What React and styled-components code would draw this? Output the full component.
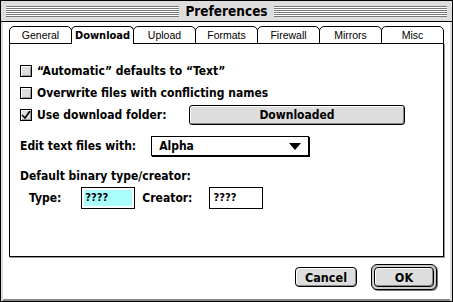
import React from "react";
import styled, { createGlobalStyle } from "styled-components";

const Global = createGlobalStyle`
  html, body { margin: 0; padding: 0; background: #fff; }
  * { box-sizing: border-box; }
`;

const SYS = `"DejaVu Sans Condensed", "Liberation Sans", sans-serif`;

const Window = styled.div`
  width: 453px;
  height: 302px;
  border: 1px solid #000;
  background: #fff;
  display: flex;
  flex-direction: column;
  font-family: ${SYS};
  font-weight: bold;
  font-size: 12px;
  color: #000;
  box-shadow: inset -2px -2px 0 #888;
`;

const TitleBar = styled.div`
  height: 21px;
  background: #ddd;
  border-bottom: 1px solid #000;
  display: flex;
  align-items: center;
  padding: 0 5px;
  gap: 4px;
`;

const Stripes = styled.div`
  flex: 1;
  height: 11px;
  background: repeating-linear-gradient(to bottom, #777 0 1px, #fff 1px 2px);
`;

const Title = styled.div`
  font-size: 13.5px;
  padding: 0 2px;
  line-height: 16px;
`;

const Body = styled.div`
  flex: 1;
  display: flex;
  flex-direction: column;
  padding: 4px 6px 0 6px;
  border-left: 2px solid #ddd;
  border-right: 2px solid #ddd;
`;

const TabStrip = styled.div`
  display: flex;
  height: 18px;
  padding-right: 1px;
`;

const Tab = styled.div`
  flex: 1;
  height: 18px;
  border: 1px solid #000;
  border-bottom: ${p => (p.$active ? "none" : "1px solid #000")};
  border-radius: 5px 5px 0 0;
  margin-right: -1px;
  background: #fff;
  display: flex;
  align-items: center;
  justify-content: center;
  font-family: ${p => (p.$active ? SYS : `"Liberation Sans", sans-serif`)};
  font-size: ${p => (p.$active ? "11px" : "10.5px")};
  font-weight: ${p => (p.$active ? "bold" : "normal")};
  position: relative;
  z-index: ${p => (p.$active ? 1 : 0)};
`;

const Panel = styled.div`
  height: 214px;
  margin-top: -1px;
  border: 1px solid #000;
  box-shadow: 1px 1px 0 #999;
  padding: 16px 10px 0 10px;
  display: flex;
  flex-direction: column;
`;

const CheckRow = styled.label`
  display: flex;
  align-items: center;
  height: 22px;
  gap: 5px;
`;

const Box = styled.span`
  width: 12px;
  height: 12px;
  border: 1px solid #000;
  background: #ddd;
  box-shadow: inset 1px 1px 0 #fff, inset -1px -1px 0 #999;
  display: inline-flex;
  align-items: center;
  justify-content: center;
  flex: none;
`;

const FolderButton = styled.div`
  margin-left: auto;
  width: 216px;
  height: 20px;
  border: 1px solid #000;
  border-radius: 3px;
  background: #ddd;
  box-shadow: inset 1px 1px 0 #fff, inset -1px -1px 0 #888;
  display: flex;
  align-items: center;
  justify-content: center;
  margin-right: 28px;
`;

const FieldRow = styled.div`
  display: flex;
  align-items: center;
  height: 22px;
  margin-top: ${p => p.$mt || 0}px;
  padding-left: ${p => p.$indent || 0}px;
`;

const Popup = styled.div`
  margin-left: 15px;
  width: 158px;
  height: 20px;
  border: 1px solid #000;
  box-shadow: 1px 1px 0 #000;
  display: flex;
  align-items: center;
  padding: 0 7px 0 7px;
  justify-content: space-between;
`;

const Field = styled.div`
  width: 54px;
  height: 22px;
  border: 1px solid #000;
  padding: 2px;
  margin-left: ${p => p.$ml}px;
  margin-right: ${p => p.$mr || 0}px;
`;

const FieldInner = styled.div`
  height: 100%;
  background: ${p => (p.$focus ? "#aaffff" : "#fff")};
  font-size: 11px;
  line-height: 16px;
  padding-left: 1px;
`;

const Footer = styled.div`
  flex: 1;
  display: flex;
  justify-content: flex-end;
  align-items: center;
  gap: 14px;
  padding-right: 7px;
  padding-bottom: 4px;
`;

const PushButton = styled.div`
  width: ${p => p.$w}px;
  height: 20px;
  border: 1px solid #000;
  border-radius: 4px;
  background: #ddd;
  box-shadow: inset 1px 1px 0 #fff, inset -1px -1px 0 #888;
  display: flex;
  align-items: center;
  justify-content: center;
  font-size: 12.5px;
`;

const DefaultRing = styled.div`
  padding: 2px;
  border: 1px solid #000;
  border-radius: 6px;
  background: #ccc;
  box-shadow: 1px 1px 0 #777;
`;

const tabs = ["General", "Download", "Upload", "Formats", "Firewall", "Mirrors", "Misc"];

function Check({ checked }) {
  return (
    <Box>
      {checked && (
        <svg width="10" height="10" viewBox="0 0 10 10">
          <path d="M1 5 L4 8 L9 1" stroke="#000" strokeWidth="1.6" fill="none" />
        </svg>
      )}
    </Box>
  );
}

export default function App() {
  return (
    <>
      <Global />
      <Window>
        <TitleBar>
          <Stripes />
          <Title>Preferences</Title>
          <Stripes />
        </TitleBar>
        <Body>
          <TabStrip>
            {tabs.map(t => (
              <Tab key={t} $active={t === "Download"}>{t}</Tab>
            ))}
          </TabStrip>
          <Panel>
            <CheckRow><Check />“Automatic” defaults to “Text”</CheckRow>
            <CheckRow><Check />Overwrite files with conflicting names</CheckRow>
            <CheckRow><Check checked />Use download folder:<FolderButton>Downloaded</FolderButton></CheckRow>
            <FieldRow $mt={9}>
              Edit text files with:
              <Popup>
                <span>Alpha</span>
                <svg width="12" height="7" viewBox="0 0 12 7"><path d="M0 0 H12 L6 7 Z" fill="#000" /></svg>
              </Popup>
            </FieldRow>
            <FieldRow $mt={8}>Default binary type/creator:</FieldRow>
            <FieldRow $indent={9}>
              Type:<Field $ml={20} $mr={7}><FieldInner $focus>????</FieldInner></Field>
              Creator:<Field $ml={17}><FieldInner>????</FieldInner></Field>
            </FieldRow>
          </Panel>
          <Footer>
            <PushButton $w={62}>Cancel</PushButton>
            <DefaultRing><PushButton $w={60}>OK</PushButton></DefaultRing>
          </Footer>
        </Body>
      </Window>
    </>
  );
}
